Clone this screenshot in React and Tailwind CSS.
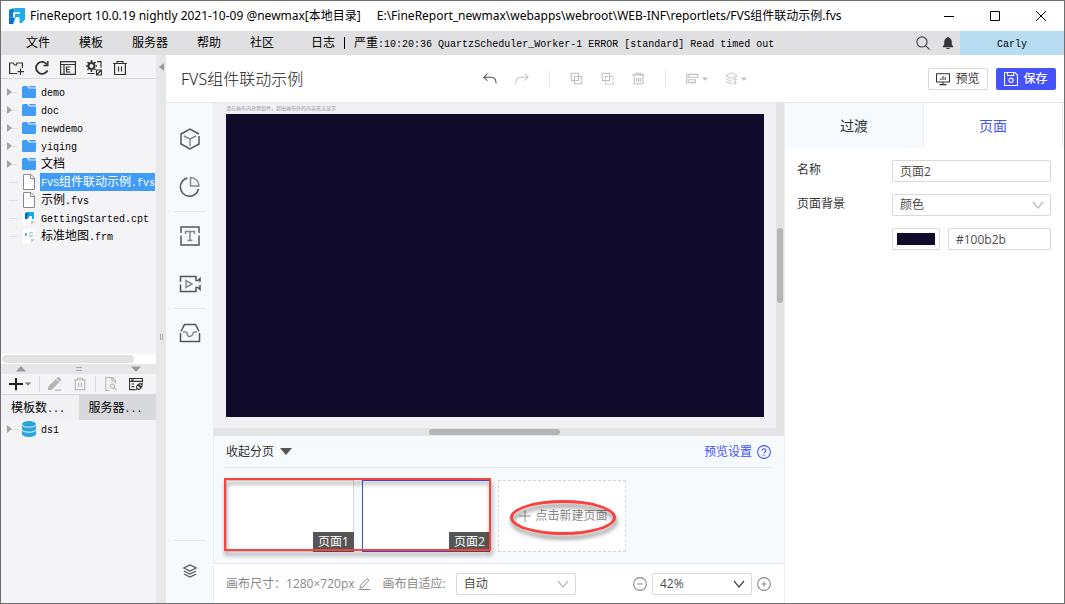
import React from "react";

const MENUS = ["文件", "模板", "服务器", "帮助", "社区"];

const FILES = [
  { name: "demo", type: "folder" },
  { name: "doc", type: "folder" },
  { name: "newdemo", type: "folder" },
  { name: "yiqing", type: "folder" },
  { name: "文档", type: "folder" },
  { name: "FVS组件联动示例.fvs", type: "file", selected: true },
  { name: "示例.fvs", type: "file" },
  { name: "GettingStarted.cpt", type: "cpt" },
  { name: "标准地图.frm", type: "frm" },
];

const Icon = ({ size = 16, className = "", width = 1.2, children, ...rest }) => (
  <svg
    width={size}
    height={size}
    viewBox="0 0 16 16"
    fill="none"
    stroke="currentColor"
    strokeWidth={width}
    className={`shrink-0 ${className}`}
    aria-hidden="true"
    {...rest}
  >
    {children}
  </svg>
);

// Latin glyphs are half the width of a Chinese one
const MonoText = ({ children }) =>
  children
    .split(/([\u4e00-\u9fff]+)/)
    .filter(Boolean)
    .map((part, i) => (
      <span
        key={i}
        className={
          /[\u4e00-\u9fff]/.test(part)
            ? "text-[12px]"
            : "font-['Liberation_Mono',monospace] text-[10px]"
        }
      >
        {part}
      </span>
    ));

const IconButton = ({ label, className = "", children }) => (
  <button
    type="button"
    aria-label={label}
    className={`flex items-center justify-center ${className}`}
  >
    {children}
  </button>
);

const Chevron = ({ className = "" }) => (
  <svg
    width="12"
    height="12"
    viewBox="0 0 12 12"
    fill="none"
    stroke="currentColor"
    className={`pointer-events-none absolute top-1/2 -translate-y-1/2 ${className}`}
    aria-hidden="true"
  >
    <path d="M1 3l5 6 5-6" strokeWidth="1.2" />
  </svg>
);

const Caret = ({ size = 6, className = "" }) => (
  <svg width={size} height={size} viewBox="0 0 6 6" className={className} aria-hidden="true">
    <path d="M0 1.500h6L3 4.800z" fill="currentColor" />
  </svg>
);

const Select = ({ value, options, label, id, className = "", arrow = "text-[#bbb]" }) => (
  <div className={`relative ${className}`}>
    <select
      id={id}
      aria-label={label}
      defaultValue={value}
      className="h-[22px] w-full appearance-none rounded-xs border border-[#d9d9d9] bg-white pl-[7px] text-[12px] leading-5 text-[#4c4c4c]"
    >
      {options.map((o) => (
        <option key={o}>{o}</option>
      ))}
    </select>
    <Chevron className={`right-[7px] ${arrow}`} />
  </div>
);

const TitleBar = () => (
  <header className="flex h-[30px] shrink-0 items-center bg-white pl-2 font-['Noto_Sans','Noto_Sans_CJK_SC',sans-serif] text-[12px] text-black">
    <svg width="16" height="16" viewBox="0 0 16 16" className="mr-[5px]" aria-hidden="true">
      <path d="M0 2L3 .5h2.500v4L4 6v3.500H0z" fill="#0b7fd6" />
      <path d="M0 9.500h5.500V11L4 16H0z" fill="#0a6fc8" />
      <path d="M5.500 0H16v11.500L13 15h-3V9.500H7L5 16l-1-1 1.500-5z" fill="#1bb0ec" />
      <path d="M5 4h6v1.800H6V9H4V5z" fill="#fff" />
      <path d="M6.500 9.500h4V15H5z" fill="#fff" />
    </svg>
    <h1 className="whitespace-pre">
      {"FineReport 10.0.19 nightly 2021-10-09 @newmax[本地目录]"}
    </h1>
    <span className="ml-4 flex-1 truncate">
      E:\FineReport_newmax\webapps\webroot\WEB-INF\reportlets/FVS组件联动示例.fvs
    </span>
    <div className="flex">
      <IconButton label="最小化" className="w-[46px]">
        <svg width="10" height="10" stroke="#000">
          <path d="M0 5.5h10" />
        </svg>
      </IconButton>
      <IconButton label="最大化" className="w-[46px]">
        <svg width="10" height="10" stroke="#000" fill="none">
          <path d="M.5.5h9v9h-9z" />
        </svg>
      </IconButton>
      <IconButton label="关闭" className="w-[46px]">
        <svg width="10" height="10" stroke="#000">
          <path d="M0 0l10 10M10 0L0 10" />
        </svg>
      </IconButton>
    </div>
  </header>
);

const MenuBar = () => (
  <nav className="flex h-6 shrink-0 items-center bg-[#e0e0e2] pl-[25px] text-[12px] text-black">
    <div className="flex gap-[29px]">
      {MENUS.map((m) => (
        <button key={m} type="button">
          {m}
        </button>
      ))}
    </div>
    <div className="ml-[37px] flex flex-1 items-center whitespace-pre">
      <button type="button">日志</button>
      <span className="mx-[9px] h-3 w-px bg-black" />
      <span>
        <MonoText>
          严重:10:20:36 QuartzScheduler_Worker-1 ERROR [standard] Read timed out
        </MonoText>
      </span>
    </div>
    <IconButton label="搜索" className="mr-3 text-[#444]">
      <Icon size={14} width={1.3}>
        <circle cx="6.8" cy="6.8" r="5.8" />
        <path d="M11 11l4.5 4.5" />
      </Icon>
    </IconButton>
    <IconButton label="通知" className="mr-[6px] text-[#333]">
      <Icon size={12} fill="currentColor" stroke="none">
        <path d="M8 0c.9 0 1.3.6 1.3 1.4C12 2 13 4 13 6.500v3.500l2 2.500v1H1v-1L3 10V6.500C3 4 4 2 6.700 1.400 6.700.6 7.100 0 8 0zM6 14.500h4v1.500H6z" />
      </Icon>
    </IconButton>
    <button type="button" className="h-6 w-[104px] bg-[#b8dcf2]">
      <MonoText>Carly</MonoText>
    </button>
  </nav>
);

const FileIcon = ({ type }) => {
  if (type === "folder") {
    return (
      <svg width="14" height="12" viewBox="0 0 14 12" fill="#409cf5">
        <path d="M0 1.500Q0 0 1.500 0H5l2 2.500h7V11q0 1-1 1H1q-1 0-1-1z" />
        <path d="M6.500 0H13q1 0 1 1.500H8z" />
      </svg>
    );
  }
  if (type === "file") {
    return (
      <svg width="14" height="16" viewBox="0 0 14 16" fill="#fff" stroke="#8a8a8a">
        <path d="M1.500.5H9L12.500 4v11.500h-11z" />
        <path d="M8.500.5v4h4" fill="none" />
      </svg>
    );
  }
  return (
    <svg width="14" height="14" viewBox="0 0 14 14">
      <path d="M1 0h12v10l-4 4H1z" fill="#fff" />
      <path d="M13 10l-4 4v-4z" fill="#c8c8c8" />
      {type === "cpt" ? (
        <>
          <path d="M6 1h6v7h-2V5H7v2L5 8V2z" fill="#16a5e8" />
          <path d="M3 2l3-1v3L5 5v3H3z" fill="#0968c4" />
        </>
      ) : (
        <path d="M3 4h2v3H3zM7 3.500h4v1H7zM7 6.500h4v1H7z" fill="#7aa7cc" />
      )}
    </svg>
  );
};

const TreeRow = ({ name, icon, expandable, selected }) => (
  <li className="flex h-[18px] items-center whitespace-nowrap pl-[6px]">
    <span className="flex w-[15px] items-center">
      {expandable && (
        <svg width="5" height="8" viewBox="0 0 5 8">
          <path d="M0 0l5 4-5 4z" fill="#a2a2a2" />
        </svg>
      )}
      <span className={`h-px bg-[#e3e3e5] ${expandable ? "w-[6px]" : "ml-[2px] w-[9px]"}`} />
    </span>
    <span className="flex w-[14px] justify-center">{icon}</span>
    <span
      className={`ml-1 block h-[18px] pl-px leading-[18px] ${
        selected ? "bg-[#419bf9] text-white" : "text-black"
      }`}
    >
      <MonoText>{name}</MonoText>
    </span>
  </li>
);

const LeftPanel = () => (
  <aside className="flex w-[155px] shrink-0 flex-col overflow-hidden bg-[#f4f4f7] text-[12px]">
    <div className="flex h-6 shrink-0 items-center gap-[10px] border-b border-[#d9d9db] pl-[7px] pt-[2px] text-[#333]">
      <IconButton label="新建文件夹">
        <Icon>
          <path d="M9 13.500H1.600V3h3.500l1.500 2H9M8 5l1-2h5.400V8" />
          <path d="M12.500 8.500v6.500M9.500 11.600h6.500" />
        </Icon>
      </IconButton>
      <IconButton label="刷新">
        <Icon width={1.8}>
          <path d="M13.500 10.500A6 6 0 1 1 13 4.500" />
          <path d="M9.500 5.500h4.300V1" strokeWidth="1.4" />
        </Icon>
      </IconButton>
      <IconButton label="模板列表">
        <Icon>
          <path d="M.6 1.600h14.800v12.800H.6zM.6 4.500h14.800M4 4.500v10M6.500 7h4M6.500 9.500h3M6.500 12h4M6.500 6.500v6" />
        </Icon>
      </IconButton>
      <IconButton label="设置">
        <Icon>
          <circle cx="5.5" cy="6" r="3" strokeWidth="2" />
          <path
            d="M5.500 0v12M0 6h11M1.500 2l8 8M9.500 2l-8 8"
            strokeDasharray="2 8 2"
            strokeWidth="1.6"
          />
          <path d="M11 1.600h4v6M1.500 13.500h7M10.500 10h5v5h-5zM10.500 15l5-5" />
        </Icon>
      </IconButton>
      <IconButton label="删除">
        <Icon>
          <path d="M1 3.500h14M5 3.500v-2h6v2M2.600 3.500v11h10.800v-11M6.500 6.500v5M9.500 6.500v5" />
        </Icon>
      </IconButton>
    </div>
    <ul className="min-h-0 flex-1 overflow-hidden pt-1">
      {FILES.map((f) => (
        <TreeRow
          key={f.name}
          name={f.name}
          icon={<FileIcon type={f.type} />}
          expandable={f.type === "folder"}
          selected={f.selected}
        />
      ))}
    </ul>
    <div className="flex h-[10px] shrink-0 items-center bg-white px-px">
      <div className="h-2 w-[86%] rounded-full bg-[#e2e2e2]" />
    </div>
    <div className="flex h-[10px] shrink-0 items-center justify-between bg-[#e7e7e7] px-[15px] text-[#999]">
      <Caret size={10} className="rotate-180" />
      <span className="h-[4px] w-[6px] border-y border-[#aaa]" />
      <Caret size={10} />
    </div>

    {/* Datasets */}
    <div className="flex h-[21px] shrink-0 items-center border-b border-[#d9d9db] pl-2 text-[#b5b5b8]">
      <IconButton label="新增数据集" className="gap-[2px]">
        <Icon size={14} width={2.4} className="text-[#222]">
          <path d="M8 1v14M0 8h16" />
        </Icon>
        <Caret className="text-[#777]" />
      </IconButton>
      <span className="mx-2 h-4 w-px bg-[#d9d9db]" />
      <IconButton label="编辑">
        <Icon size={14}>
          <path d="M1 11L9 3l3 3-8 8-3.500.5zM10.500 1.500L12 .5l2.800 2.800-1.300 1.500zM8 15h7" fill="currentColor" />
        </Icon>
      </IconButton>
      <IconButton label="删除数据集" className="ml-[11px]">
        <Icon size={14}>
          <path d="M1 3.500h14M5 3.500v-2h6v2M2.600 3.500v11h10.800v-11M6.500 6.500v5M9.500 6.500v5" />
        </Icon>
      </IconButton>
      <span className="mx-2 h-4 w-px bg-[#d9d9db]" />
      <IconButton label="预览数据">
        <Icon size={14}>
          <path d="M6 15.400H2V.6h7.500L13 4v3M9 .6V4.500h4" />
          <circle cx="9.5" cy="10.5" r="2.5" />
          <path d="M11.500 12.500l2.500 2.500" />
        </Icon>
      </IconButton>
      <IconButton label="连接设置" className="ml-[11px] text-[#333]">
        <Icon size={14}>
          <path d="M7 14.400H.6V1.600h14.800V6M.6 5h14.800M3 8h3M3 11h3M2.500 3.300h3" />
          <path d="M7.500 15l2-2M15.500 7l-2 2" />
          <path d="M10 9l3.500 3.500-1 1.200q-1.500 1-3-.5t-.5-3zM11 8.500l3 3 .8-1q.7-1.500-.4-2.500t-2.500-.4z" />
        </Icon>
      </IconButton>
    </div>
    <div className="grid h-[25px] shrink-0 grid-cols-2 text-black">
      <button type="button" className="bg-[#f1f1f3] pl-[10px] text-left">
        <MonoText>模板数...</MonoText>
      </button>
      <button type="button" className="bg-[#d8d9dd] pl-[10px] text-left">
        <MonoText>服务器...</MonoText>
      </button>
    </div>
    <ul className="h-[183px] shrink-0">
      <TreeRow
        name="ds1"
        expandable
        icon={
          <svg width="14" height="16" viewBox="0 0 14 16">
            <path d="M0 3v10c0 4 14 4 14 0V3z" fill="#2ba5e2" />
            <ellipse cx="7" cy="3" rx="7" ry="3" fill="#2ba5e2" />
            <path
              d="M0 3.500c0 3.600 14 3.600 14 0M0 8.500c0 3.600 14 3.600 14 0"
              stroke="#f4f4f7"
              fill="none"
            />
          </svg>
        }
      />
    </ul>
  </aside>
);

const Splitter = () => (
  <div className="flex w-[10px] shrink-0 flex-col items-center bg-[#e7e7e7] pt-2">
    <svg width="5" height="8" viewBox="0 0 5 8">
      <path d="M5 0v8L0 4z" fill="#999" />
    </svg>
    <span className="my-auto h-[6px] w-[3px] border-x border-[#aaa]" />
  </div>
);

const TopBar = () => (
  <div className="grid h-12 shrink-0 grid-cols-[1fr_auto_1fr] items-center border-b border-[#e2e4ee] bg-white px-2">
    <h2 className="pl-[7px] font-['Noto_Sans','Noto_Sans_CJK_SC',sans-serif] text-[16px] font-light text-[#222]">
      FVS组件联动示例
    </h2>
    <div className="flex items-center text-[#bfbfbf]">
      <IconButton label="撤销" className="text-[#4c4c4c]">
        <Icon size={14}>
          <path d="M5 2L1 6l4 4M1 6h8.500c4 0 5.500 2.500 5.500 7" />
        </Icon>
      </IconButton>
      <IconButton label="重做" className="ml-[18px]">
        <Icon size={14}>
          <path d="M11 2l4 4-4 4M15 6H6.500C2.500 6 1 8.500 1 13" />
        </Icon>
      </IconButton>
      <span className="mx-5 h-4 w-px bg-[#e6e6e6]" />
      <IconButton label="复制">
        <Icon size={13} width={1.4}>
          <path d="M1.500 1.500h9v9h-9zM5.500 5.500h9v9h-9z" />
        </Icon>
      </IconButton>
      <IconButton label="粘贴" className="ml-[18px]">
        <Icon size={13} width={1.4}>
          <path d="M1.500 1.500h9v9h-9zM5.500 9V5.500H9" />
          <path d="M11 5.500h4v9.500H5.500v-4" strokeDasharray="2 1.2" />
        </Icon>
      </IconButton>
      <IconButton label="删除组件" className="ml-[18px]">
        <Icon size={13} width={1.4}>
          <path d="M.5 3.500h15M5 3.500v-2h6v2M2.600 3.500v11h10.800v-11M5.700 7v5M8 7v5M10.300 7v5" />
        </Icon>
      </IconButton>
      <span className="mx-5 h-4 w-px bg-[#e6e6e6]" />
      <IconButton label="对齐" className="gap-[3px]">
        <Icon size={13} width={1.4}>
          <path d="M1 1v14M3.500 3h11v3.500h-11zM3.500 9.500h8V13h-8z" />
        </Icon>
        <Caret />
      </IconButton>
      <IconButton label="层级" className="ml-[17px] gap-[3px]">
        <Icon size={13}>
          <path d="M8 1l7 3.500L8 8 1 4.500zM1 8l7 3.500M1 11.500L8 15M12.500 7.500v7.500M10.500 9.500l2-2 2 2M10.500 13l2 2 2-2" />
        </Icon>
        <Caret />
      </IconButton>
    </div>
    <div className="flex justify-end gap-2 text-[12px]">
      <button
        type="button"
        className="flex h-[22px] w-[60px] items-center justify-center gap-[5px] rounded-xs border border-[#d9d9d9] bg-white text-[#333]"
      >
        <Icon size={14}>
          <path d="M.6 2h14.800v9.500H.6zM8 11.500V14M4 14.400h8M5.500 9V7M8 9V4.500M10.500 9V6" />
        </Icon>
        预览
      </button>
      <button
        type="button"
        className="flex h-[22px] w-[60px] items-center justify-center gap-[5px] rounded-xs bg-[#4552ff] font-medium text-white"
      >
        <Icon size={14}>
          <path d="M.6.6h12L15.400 3.500v11.900H.6zM4 .6v3.400h7V.6" />
          <circle cx="8" cy="9.5" r="2.5" />
        </Icon>
        保存
      </button>
    </div>
  </div>
);

const Tool = ({ label, children }) => (
  <IconButton label={label} className="h-12 w-full text-[#555]">
    <svg
      width="22"
      height="22"
      viewBox="0 0 22 22"
      fill="none"
      stroke="currentColor"
      strokeWidth="1.5"
      aria-hidden="true"
    >
      {children}
    </svg>
  </IconButton>
);

const ToolRail = () => (
  <div className="flex w-[48px] shrink-0 flex-col border-r border-[#eceef4] bg-[#f6fafd] pt-3">
    <Tool label="组件">
      <path d="M20 8v8l-9 5-9-5V6l9-5 9 5" />
      <path d="M5 8l6 3 6-3M11 11v7" stroke="#888" />
    </Tool>
    <Tool label="图表">
      <path d="M8.500 2A9.200 9.200 0 1 0 19.500 13" />
      <path d="M11.500 1.500a8.500 8.500 0 0 1 8.500 8.500h-8.500z" stroke="#888" />
    </Tool>
    <span className="mx-2 h-px bg-[#e3e6ea]" />
    <Tool label="文本">
      <path d="M2 8V2h18v6M2 10.500V20h18v-9.500" />
      <path d="M6.500 9V6.500h9V9M11 6.500v9M8.500 15.500h5" stroke="#888" />
    </Tool>
    <Tool label="媒体">
      <path d="M1.500 9V3.500H17v4h2l2-2V9M1.500 11.500v7H17v-4h2l2 2V12" />
      <path d="M7 7.500v7l6-3.500z" stroke="#888" />
    </Tool>
    <span className="mx-2 h-px bg-[#e3e6ea]" />
    <Tool label="容器">
      <path d="M2 9.500l3.500-7h11l3.500 7M1.500 11v8.500h19V11" />
      <path d="M4 10h3q1 0 1.500 2.500t2.500 2 2.500-2T15 10h3" stroke="#888" />
    </Tool>
    <span className="mx-2 mt-auto h-px bg-[#e3e6ea]" />
    <IconButton label="图层" className="h-[62px] pb-[2px] text-[#555]">
      <Icon size={14} width={1.3}>
        <path d="M8 1l7 3.500L8 8 1 4.500zM1 8l7 3.500L15 8M1 11.500L8 15l7-3.500" />
      </Icon>
    </IconButton>
  </div>
);

const Canvas = () => (
  <div className="flex min-h-0 flex-1 flex-col bg-[#f0f0f5]">
    <div className="flex min-h-0 flex-1">
      <div className="min-w-0 flex-1 overflow-hidden px-3">
        <p className="h-[11px] text-[5px] leading-[11px] text-[#999]">
          请在画布内放置组件，超出画布外的内容无法显示
        </p>
        <div className="aspect-video w-full bg-[#100b2b]" />
      </div>
      <div className="w-2 bg-[#e3e3e3] px-px pt-[125px]">
        <div className="h-[75px] rounded-full bg-[#b5b5b5]" />
      </div>
    </div>
    <div className="flex h-2 bg-[#e3e3e3] py-px">
      <div className="ml-[215px] w-[23%] rounded-full bg-[#b5b5b5]" />
    </div>
  </div>
);

const PageThumb = ({ name, active }) => (
  <button
    type="button"
    className={`flex h-[72px] w-32 items-end justify-end border bg-white ${
      active ? "border-[#3f4fe0]" : "border-[#d9d9d9]"
    }`}
  >
    <span className="-mr-px -mb-px h-5 w-[41px] bg-[#555] leading-[19px] text-white">{name}</span>
  </button>
);

const PagesPanel = () => (
  <section className="shrink-0 border-b border-[#e4e6ec] bg-[#f6fafd] px-3 pb-[11px] text-[12px]">
    <div className="flex h-8 items-center justify-between border-b border-[#e4e6ec] pr-px">
      <button type="button" className="flex items-center gap-[6px] text-[#333]">
        收起分页
        <svg width="12" height="7" viewBox="0 0 12 7" aria-hidden="true">
          <path d="M0 0h12L6 7z" fill="#555" />
        </svg>
      </button>
      <a href="#preview" className="flex items-center gap-[5px] text-[#4552ff]">
        预览设置
        <Icon size={14}>
          <circle cx="8" cy="8" r="7.3" />
          <path d="M5.700 6.500C5.700 3.500 10.300 3.500 10.300 6.300 10.300 8 8 8 8 9.800M8 11v1.500" />
        </Icon>
      </a>
    </div>
    <div className="mt-3 flex gap-2">
      <div className="relative flex gap-2">
        <PageThumb name="页面1" />
        <PageThumb name="页面2" active />
        <span className="pointer-events-none absolute -left-[2px] -right-px -top-[2px] bottom-px border-2 border-[#fb4040] drop-shadow-[1px_4px_2px_rgba(0,0,0,0.45)]" />
      </div>
      <button
        type="button"
        className="relative flex h-[72px] w-32 items-center justify-center gap-1 border border-dashed border-[#d4d4d4] bg-white pl-[3px] text-[#888]"
      >
        <Icon size={12} width={1.3}>
          <path d="M8 0v16M0 8h16" />
        </Icon>
        点击新建页面
        <span className="pointer-events-none absolute left-[11px] right-[9px] top-[19px] bottom-4 rounded-[50%] border-[3px] border-[#fb4040] drop-shadow-[1px_4px_2px_rgba(0,0,0,0.5)]" />
      </button>
    </div>
  </section>
);

const StatusBar = () => (
  <div className="flex h-[39px] shrink-0 items-center bg-white px-3 text-[12px] text-[#888]">
    <span>画布尺寸：</span>
    <span>1280×720px</span>
    <IconButton label="修改尺寸" className="ml-[3px]">
      <Icon size={13}>
        <path d="M3 10.500l8-8.500 2.500 2L6 12.500l-3.500 1zM1 15.300h14" />
      </Icon>
    </IconButton>
    <label htmlFor="fit" className="ml-3">
      画布自适应:
    </label>
    <Select id="fit" value="自动" options={["自动", "横向", "纵向"]} className="ml-[10px] w-[120px]" />
    <div className="ml-auto flex items-center gap-[5px] pr-px">
      <IconButton label="缩小">
        <Icon size={14}>
          <circle cx="8" cy="8" r="7.3" />
          <path d="M5 8h6" />
        </Icon>
      </IconButton>
      <Select label="缩放" value="42%" options={["42%", "100%"]} className="w-[100px]" arrow="text-[#444]" />
      <IconButton label="放大">
        <Icon size={14}>
          <circle cx="8" cy="8" r="7.3" />
          <path d="M5 8h6M8 5v6" />
        </Icon>
      </IconButton>
    </div>
  </div>
);

const LABEL = "w-[95px] shrink-0 leading-[19px] text-[#333]";
const INPUT =
  "h-[22px] w-full min-w-0 rounded-xs border border-[#d9d9d9] bg-white px-[7px] text-[12px] text-[#4c4c4c]";

const PropertyPanel = () => (
  <aside className="w-[280px] shrink-0 border-l border-[#eceef4] bg-white text-[12px]">
    <div role="tablist" className="mr-px grid h-[45px] grid-cols-2 text-[14px]">
      <button
        type="button"
        role="tab"
        aria-selected="false"
        className="border-r border-[#e6eaf2] bg-[#f6fafd] text-[#333]"
      >
        过渡
      </button>
      <button
        type="button"
        role="tab"
        aria-selected="true"
        className="border-r border-[#e6eaf2] text-[#4552ff]"
      >
        页面
      </button>
    </div>
    <div className="flex flex-col gap-3 pl-3 pr-[13px] pt-3">
      <div className="flex h-[22px]">
        <label htmlFor="page-name" className={LABEL}>
          名称
        </label>
        <input id="page-name" defaultValue="页面2" className={INPUT} />
      </div>
      <div className="flex h-[22px]">
        <label htmlFor="page-bg" className={LABEL}>
          页面背景
        </label>
        <Select id="page-bg" value="颜色" options={["颜色", "图片"]} className="flex-1" />
      </div>
      <div className="flex h-[22px] gap-2 pl-[95px]">
        <button
          type="button"
          aria-label="选择颜色"
          className="h-[22px] w-12 shrink-0 rounded-xs border border-[#d9d9d9] bg-white p-1"
        >
          <span className="block h-3 bg-[#100b2b]" />
        </button>
        <input aria-label="颜色值" defaultValue="#100b2b" className={INPUT} />
      </div>
    </div>
  </aside>
);

const App = () => (
  <div className="flex h-screen flex-col overflow-hidden border border-[#6f6f6f] bg-white font-['Open_Sans','Noto_Sans_CJK_SC',sans-serif]">
    <TitleBar />
    <MenuBar />
    <div className="flex min-h-0 flex-1">
      <LeftPanel />
      <Splitter />
      <main className="flex min-w-0 flex-1 flex-col">
        <TopBar />
        <div className="flex min-h-0 flex-1">
          <ToolRail />
          <div className="flex min-w-0 flex-1 flex-col">
            <Canvas />
            <PagesPanel />
            <StatusBar />
          </div>
          <PropertyPanel />
        </div>
      </main>
    </div>
  </div>
);

export default App;
